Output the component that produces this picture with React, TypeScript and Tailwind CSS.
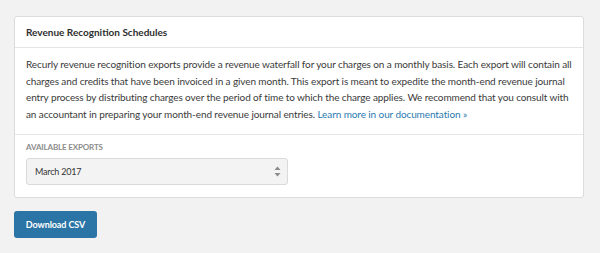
import React from "react";

const SelectArrows: React.FC = () => (
  <svg width="7" height="11" viewBox="0 0 7 11" className="shrink-0">
    <path d="M3.5 0.5 L6.5 4 L0.5 4 Z" fill="#8a8a8a" />
    <path d="M3.5 10.5 L6.5 7 L0.5 7 Z" fill="#8a8a8a" />
  </svg>
);

const lines = [
  "Recurly revenue recognition exports provide a revenue waterfall for your charges on a monthly basis. Each export will contain all",
  "charges and credits that have been invoiced in a given month. This export is meant to expedite the month-end revenue journal",
  "entry process by distributing charges over the period of time to which the charge applies. We recommend that you consult with",
];

export default function App() {
  return (
    <div className="min-h-[253px] w-full bg-[#f2f2f2] pt-4 pl-[14px] font-['Lato',sans-serif]">
      <div className="w-[570px] rounded-[3px] border border-[#dcdcdc] bg-white">
        <div className="flex h-[31px] items-center border-b border-[#e6e6e6] px-[11px] text-[10px] font-bold text-[#2e2e2e]">
          Revenue Recognition Schedules
        </div>
        <div className="border-b border-[#e6e6e6] px-[11px] pt-[8px] pb-[12px] text-[10px] leading-[16.5px] tracking-[-0.1px] whitespace-nowrap text-[#3a3a3a]">
          {lines.map((l) => (
            <div key={l}>{l}</div>
          ))}
          <div>
            an accountant in preparing your month-end revenue journal entries.{" "}
            <a href="#" className="text-[#2a7ab0]">
              Learn more in our documentation »
            </a>
          </div>
        </div>
        <div className="px-[11px] pt-[6px] pb-[12px]">
          <div className="mb-[5px] text-[8px] leading-[12px] font-bold tracking-[-0.15px] text-[#8c8c8c] uppercase">
            Available Exports
          </div>
          <div className="flex h-[27px] w-[262px] items-center justify-between rounded-[3px] border border-[#dadada] bg-[#f3f3f3] pr-[6px] pl-[8px] text-[9px] tracking-[-0.2px] text-[#333]">
            <span>March 2017</span>
            <SelectArrows />
          </div>
        </div>
      </div>
      <button className="mt-[13px] flex h-[27px] w-[83px] items-center justify-center rounded-[3px] bg-[#2b74a6] text-[9px] font-bold tracking-[-0.1px] whitespace-nowrap text-white">
        Download CSV
      </button>
    </div>
  );
}
